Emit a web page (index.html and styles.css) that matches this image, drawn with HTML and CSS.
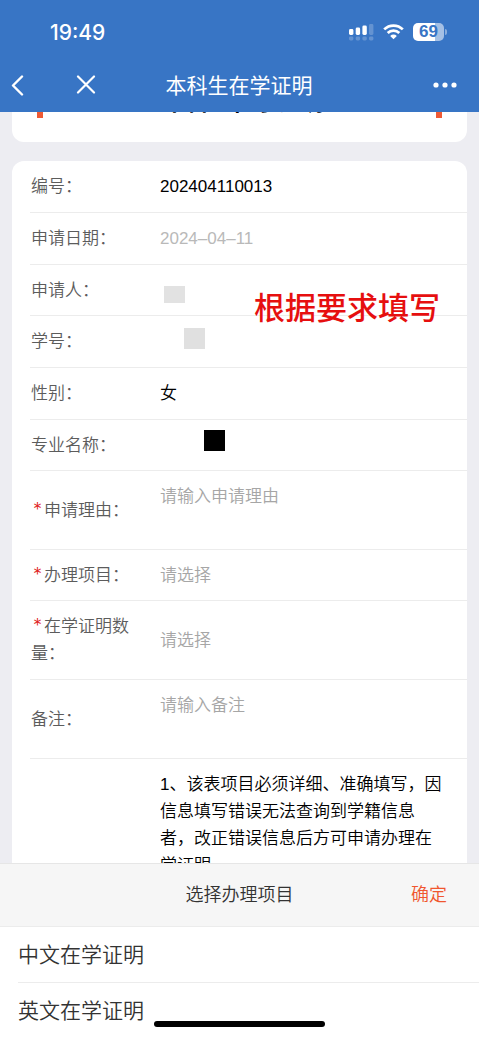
FILE: index.html
```html
<!DOCTYPE html>
<html lang="zh-CN">
<head>
<meta charset="utf-8">
<meta name="viewport" content="width=device-width, initial-scale=1">
<title>本科生在学证明</title>
<link rel="stylesheet" href="styles.css">
</head>
<body>
<div class="app">
  <header class="top">
    <div class="status">
      <span class="clock">19:49</span>
      <div class="status-icons">
        <svg class="signal" width="25" height="17" viewBox="0 0 25 17" fill="#fff" aria-hidden="true">
          <rect x="0" y="5" width="4.4" height="6" rx="1.4"/>
          <rect x="6.7" y="3.5" width="4.4" height="7.5" rx="1.4"/>
          <rect x="13.4" y="1.5" width="4.4" height="9.5" rx="1.4"/>
          <g opacity=".22">
            <rect x="20" y="0" width="4.4" height="11" rx="1.4"/>
            <rect x="0" y="12.5" width="4.4" height="4" rx="1.4"/>
            <rect x="6.7" y="12.5" width="4.4" height="4" rx="1.4"/>
            <rect x="13.4" y="12.5" width="4.4" height="4" rx="1.4"/>
            <rect x="20" y="12.5" width="4.4" height="4" rx="1.4"/>
          </g>
        </svg>
        <svg class="wifi" width="21" height="16" viewBox="0 0 21 16" aria-hidden="true">
          <g fill="none" stroke="#fff" stroke-width="2.7">
            <path d="M1.2 5.4a13.2 13.2 0 0 1 18.6 0"/>
            <path d="M4.7 9a8.2 8.2 0 0 1 11.6 0"/>
          </g>
          <path d="M7.2 11.9a4.7 4.7 0 0 1 6.6 0l-3.3 3.4z" fill="#fff"/>
        </svg>
        <div class="battery"><span class="battery-level">69</span></div>
      </div>
    </div>
    <nav class="navbar">
      <div class="nav-side">
        <button class="icon-btn" type="button" aria-label="返回">
          <svg width="14" height="22" viewBox="0 0 14 22" fill="none" stroke="#fff" stroke-width="2.4" stroke-linecap="round" stroke-linejoin="round"><path d="M12 2.5 3 11.5l9 9"/></svg>
        </button>
        <button class="icon-btn" type="button" aria-label="关闭">
          <svg width="20" height="20" viewBox="0 0 20 20" fill="none" stroke="#fff" stroke-width="2.2" stroke-linecap="round"><path d="M2 1.5l16 16M18 1.5 2 17.5"/></svg>
        </button>
      </div>
      <h1 class="nav-title">本科生在学证明</h1>
      <div class="nav-side nav-end">
        <button class="icon-btn" type="button" aria-label="更多">
          <svg width="24" height="6" viewBox="0 0 24 6" fill="#fff"><circle cx="3" cy="3" r="2.6"/><circle cx="12" cy="3" r="2.6"/><circle cx="21" cy="3" r="2.6"/></svg>
        </button>
      </div>
    </nav>
  </header>

  <main class="content">
    <section class="card banner">
      <span class="mark"></span>
      <h2 class="banner-title">本科生在学证明</h2>
      <span class="mark"></span>
    </section>

    <form class="card form">
      <div class="row">
        <label class="label" for="no">编号：</label>
        <input class="field" id="no" value="202404110013" readonly>
      </div>
      <div class="row">
        <label class="label" for="date">申请日期：</label>
        <input class="field muted" id="date" value="2024–04–11" readonly>
      </div>
      <div class="row">
        <span class="label">申请人：</span>
        <span class="field"><i class="mask mask-name"></i></span>
      </div>
      <div class="row">
        <span class="label">学号：</span>
        <span class="field"><i class="mask mask-id"></i></span>
      </div>
      <div class="row">
        <label class="label" for="sex">性别：</label>
        <input class="field" id="sex" value="女" readonly>
      </div>
      <div class="row">
        <span class="label">专业名称：</span>
        <span class="field"><i class="mask mask-major"></i></span>
      </div>
      <div class="row tall">
        <label class="label required" for="reason">申请理由：</label>
        <textarea class="field" id="reason" rows="2" placeholder="请输入申请理由"></textarea>
      </div>
      <div class="row short">
        <label class="label required" for="item">办理项目：</label>
        <select class="field select" id="item"><option>请选择</option></select>
      </div>
      <div class="row tall">
        <label class="label required" for="count">在学证明数量：</label>
        <select class="field select" id="count"><option>请选择</option></select>
      </div>
      <div class="row tall">
        <label class="label" for="memo">备注：</label>
        <textarea class="field" id="memo" rows="2" placeholder="请输入备注"></textarea>
      </div>
      <div class="row notes">
        <span class="label"></span>
        <p class="field">1、该表项目必须详细、准确填写，因信息填写错误无法查询到学籍信息者，改正错误信息后方可申请办理在学证明</p>
      </div>
      <strong class="tip">根据要求填写</strong>
    </form>
  </main>

  <section class="sheet">
    <div class="sheet-head">
      <h2 class="sheet-title">选择办理项目</h2>
      <button class="confirm" type="button">确定</button>
    </div>
    <div class="options">
      <button class="option" type="button">中文在学证明</button>
      <button class="option" type="button">英文在学证明</button>
    </div>
    <div class="home-bar"></div>
  </section>
</div>
</body>
</html>
```
FILE: styles.css
```css
* {
  box-sizing: border-box;
}

body {
  margin: 0;
  font-family: "Liberation Sans", "Noto Sans CJK SC", sans-serif;
  font-size: 17px;
  font-weight: 350;
  line-height: 27px;
  color: #000;
  background: #ededf2;
}

h1,
h2,
p {
  margin: 0;
}

button,
input,
select,
textarea {
  font: inherit;
  color: inherit;
  border: 0;
  margin: 0;
  padding: 0;
  background: none;
  border-radius: 0;
}

.app {
  display: flex;
  flex-direction: column;
  height: 100vh;
  overflow: hidden;
}

/* Status bar and navigation */
.top {
  flex: none;
  padding-top: 18px;
  color: #fff;
  background: #3875c5;
}

.status {
  display: flex;
  align-items: center;
  justify-content: space-between;
  height: 28px;
  padding: 0 35px 0 50px;
}

.clock {
  font-family: Inter, sans-serif;
  font-size: 21px;
  font-weight: 500;
}

.status-icons {
  display: flex;
  align-items: center;
  gap: 9px;
}

.battery {
  position: relative;
  width: 31px;
  height: 18px;
  border-radius: 5px;
  background: linear-gradient(to right, #fff 70%, #a5c0e5 70%);
}

.battery::after {
  content: "";
  position: absolute;
  right: -3px;
  top: 6px;
  width: 2px;
  height: 6px;
  border-radius: 0 2px 2px 0;
  background: #8aaddd;
}

.battery-level {
  display: block;
  font-family: "Liberation Sans", sans-serif;
  font-size: 17px;
  font-weight: 700;
  line-height: 18px;
  text-align: center;
  color: #3875c5;
}

.navbar {
  display: flex;
  align-items: center;
  height: 66px;
  padding: 12px 22px 0 10px;
}

.nav-side {
  display: flex;
  flex: 1 1 0;
  align-items: center;
  gap: 52px;
}

.nav-end {
  justify-content: flex-end;
}

.icon-btn {
  display: flex;
}

.nav-title {
  padding-left: 11px;
  font-size: 21px;
  font-weight: 400;
}

/* Scrolled page */
.content {
  flex: 1;
  min-height: 0;
  padding: 0 12px;
  overflow: hidden;
}

.card {
  border-radius: 12px;
  background: #fff;
}

.banner {
  display: flex;
  align-items: flex-end;
  justify-content: space-between;
  height: 80px;
  margin-top: -50px;
  padding: 0 25px 24px;
}

.banner-title {
  padding: 0 0 2px 8px;
  font-size: 23px;
  font-weight: 700;
  line-height: 28px;
}

.mark {
  width: 6px;
  height: 24px;
  background: #ef5a34;
}

.form {
  position: relative;
  margin-top: 19px;
  padding-left: 18px;
}

.row {
  display: flex;
  align-items: center;
  min-height: 52px;
  border-bottom: 1px solid #ececec;
}

.row:nth-child(3n) {
  min-height: 51px;
}

.row.short {
  min-height: 51px;
}

.row.tall {
  min-height: 79px;
}

.label {
  flex: none;
  width: 104px;
  margin-right: 26px;
  padding-left: 1px;
  color: #5c5c5c;
}

.required::before {
  content: "*";
  margin: 0 2px;
  font-family: Inter, sans-serif;
  font-size: 18px;
  line-height: 20px;
  color: #e02020;
}

.field {
  flex: 1;
  min-width: 0;
  position: relative;
}

.muted {
  color: #b9b9b9;
}

textarea.field {
  display: block;
  height: 54px;
  resize: none;
}

.field::placeholder {
  color: #a6a6a6;
  opacity: 1;
}

.select {
  appearance: none;
  color: #a6a6a6;
}

.notes {
  align-items: flex-start;
  padding: 12px 24px 12px 0;
}

/* Blocks covering private values */
.mask {
  position: absolute;
  width: 21px;
  height: 21px;
}

.mask-name {
  left: 4px;
  top: -4px;
  height: 17px;
  background: #e2e2e2;
}

.mask-id {
  left: 24px;
  top: -14px;
  background: #e0e0e0;
}

.mask-major {
  left: 44px;
  top: -15px;
  background: #000;
}

.tip {
  position: absolute;
  top: 128px;
  right: 27px;
  font-size: 31px;
  font-weight: 500;
  line-height: 40px;
  color: #e60f0f;
}

/* Bottom picker */
.sheet {
  position: relative;
  flex: none;
  color: #333;
  background: #fff;
}

.sheet-head {
  display: grid;
  grid-template-columns: 1fr auto 1fr;
  align-items: center;
  height: 64px;
  padding: 0 32px;
  border-top: 1px solid #e6e6e6;
  border-bottom: 1px solid #ececec;
  background: #f6f6f6;
}

.sheet-title {
  grid-column: 2;
  font-size: 18px;
  font-weight: 350;
}

.confirm {
  justify-self: end;
  font-size: 18px;
  color: #f0562f;
}

.options {
  padding-left: 18px;
}

.option {
  display: block;
  width: 100%;
  height: 55px;
  font-size: 21px;
  text-align: left;
}

.option + .option {
  border-top: 1px solid #ececec;
}

.home-bar {
  position: absolute;
  left: 50%;
  bottom: 10px;
  width: 171px;
  height: 6px;
  margin-left: -86px;
  border-radius: 3px;
  background: #000;
}
```
